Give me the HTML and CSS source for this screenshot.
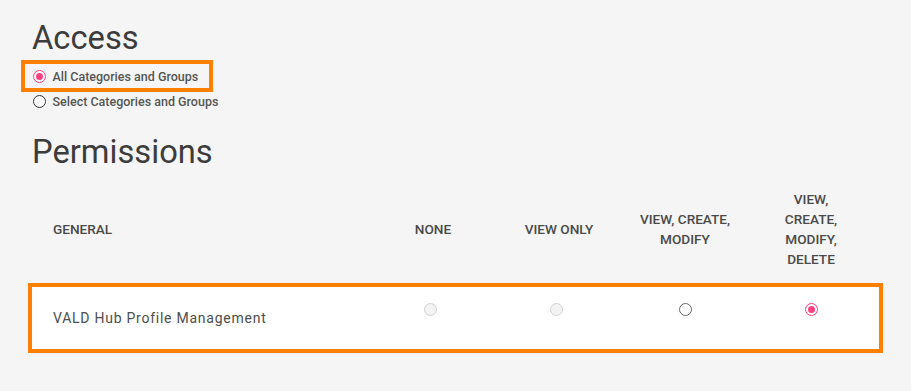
FILE: index.html
```html
<!DOCTYPE html>
<html lang="en">
<head>
<meta charset="utf-8">
<title>Access and Permissions</title>
<link rel="stylesheet" href="styles.css">
</head>
<body>
<main class="page">
  <h1 class="section-title">Access</h1>
  <div class="radio-list">
    <label class="radio-item highlighted"><span class="radio checked"></span><span class="radio-label">All Categories and Groups</span></label>
    <label class="radio-item"><span class="radio"></span><span class="radio-label">Select Categories and Groups</span></label>
  </div>

  <h2 class="section-title permissions-title">Permissions</h2>
  <div class="perm-table">
    <div class="perm-head">
      <div class="head-cell first">GENERAL</div>
      <div class="head-cell">NONE</div>
      <div class="head-cell">VIEW ONLY</div>
      <div class="head-cell">VIEW, CREATE,<br>MODIFY</div>
      <div class="head-cell">VIEW,<br>CREATE,<br>MODIFY,<br>DELETE</div>
    </div>
    <div class="perm-row">
      <div class="row-name">VALD Hub Profile Management</div>
      <div class="row-cell shift"><span class="radio disabled"></span></div>
      <div class="row-cell shift"><span class="radio disabled"></span></div>
      <div class="row-cell"><span class="radio outline"></span></div>
      <div class="row-cell"><span class="radio checked"></span></div>
    </div>
  </div>
</main>
</body>
</html>
```

FILE: styles.css
```css
* { box-sizing: border-box; }

html, body {
  margin: 0;
  background: #f5f5f5;
}

body {
  font-family: Roboto, "Noto Sans", "Liberation Sans", sans-serif;
  color: #424242;
}

.page {
  padding: 20px 28px 0 28px;
}

.section-title {
  margin: 0 0 0 4px;
  font-size: 32.7px;
  line-height: 36px;
  font-weight: 400;
  color: #3c3c3c;
}

.permissions-title {
  margin-top: 21px;
}

.radio-list {
  display: flex;
  flex-direction: column;
  align-items: flex-start;
  gap: 1px;
  margin: 8px 0 0 -3px;
}

.radio-item {
  display: flex;
  align-items: center;
  gap: 7px;
  height: 24px;
  padding: 0 11px 0 7.5px;
  font-size: 12.5px;
  font-weight: 500;
  color: #555;
}

.radio-item.highlighted {
  outline: 4px solid #ff7f00;
}

.radio {
  display: inline-block;
  position: relative;
  width: 13px;
  height: 13px;
  border-radius: 50%;
  border: 1.3px solid #333;
  background: #fff;
  flex: none;
}

.radio.checked {
  border-color: #ff4081;
}

.radio.checked::after {
  content: "";
  position: absolute;
  left: 50%;
  top: 50%;
  width: 7px;
  height: 7px;
  margin: -3.5px 0 0 -3.5px;
  border-radius: 50%;
  background: #ff4081;
}

.radio.disabled {
  border: 1px solid #d2d2d2;
  background: #f3f3f3;
}

.radio.outline {
  border: 1.3px solid #6b6b6b;
}

.perm-table {
  display: flex;
  flex-direction: column;
}

.perm-head,
.perm-row {
  display: grid;
  grid-template-columns: 338px repeat(4, 126px);
}

.perm-head {
  padding: 19px 4px 14px 4px;
  align-items: center;
}

.head-cell {
  font-size: 13.6px;
  font-weight: 500;
  line-height: 20px;
  text-align: center;
  color: #4a4a4a;
}

.head-cell.first {
  text-align: left;
  padding-left: 21px;
}

.perm-row {
  height: 70px;
  border: 4px solid #ff7f00;
  background: #fff;
}

.row-name {
  align-self: center;
  padding-left: 21px;
  font-size: 14px;
  letter-spacing: 0.75px;
  color: #4e4e4e;
}

.row-cell {
  display: flex;
  justify-content: center;
  padding-top: 16px;
}

.row-cell.shift {
  padding-right: 6px;
}
```
